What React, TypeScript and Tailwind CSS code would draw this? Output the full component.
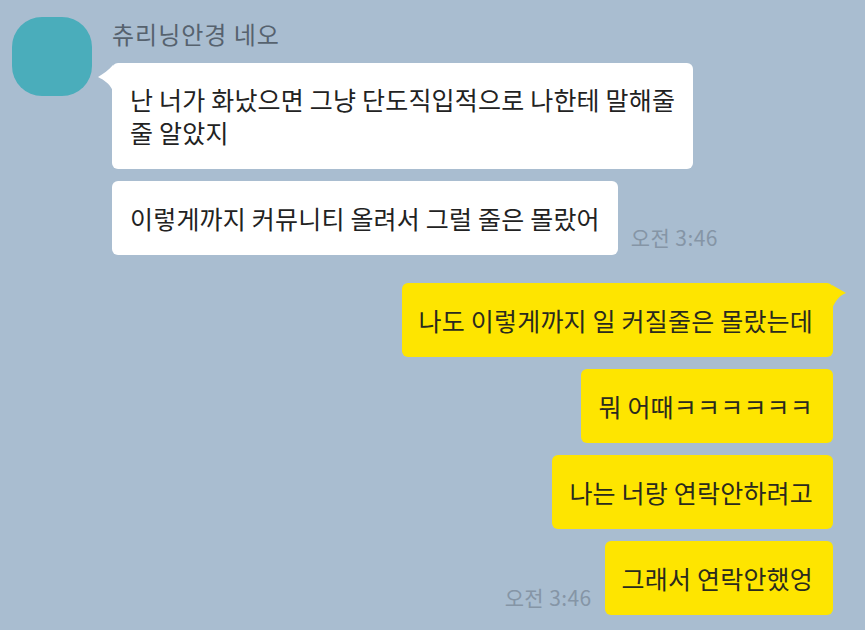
import React from "react";

const font = { fontFamily: '"Noto Sans CJK KR", "Noto Sans", sans-serif' };

function LeftTail() {
  return (
    <svg className="absolute left-[-14px] top-[2px]" width="15" height="26" viewBox="0 0 15 26">
      <path d="M15 0 L15 26 C11 18 6 15 0 12 C5 9 11 5 15 0 Z" fill="#ffffff" />
    </svg>
  );
}

function RightTail() {
  return (
    <svg className="absolute right-[-13px] top-[2px]" width="14" height="24" viewBox="0 0 14 24">
      <path d="M0 0 L14 8 C8 10 3 16 0 24 Z" fill="#fee500" />
    </svg>
  );
}

function Time() {
  return (
    <span className="mb-[7px] text-[21px] leading-none text-[#8595a6] tracking-[0.4px] whitespace-nowrap">
      오전 3:46
    </span>
  );
}

function YBubble({ children, tail }: { children: React.ReactNode; tail?: boolean }) {
  return (
    <div className="relative rounded-[6px] bg-[#fee500] pl-[17px] pr-[20px] py-[20px] text-[25px] leading-[34px] text-[#2a2a1e] tracking-[0.2px] whitespace-nowrap">
      {tail && <RightTail />}
      {children}
    </div>
  );
}

export default function App() {
  return (
    <div className="w-[865px] h-[630px] overflow-hidden bg-[#a9bdd0]" style={font}>
      <div className="flex gap-[20px] pl-[12px] pt-[17px]">
        <div className="w-[80px] h-[79px] rounded-[30px] bg-[#4aadbb] shrink-0" />
        <div className="flex flex-col">
          <div className="mt-[3px] text-[24px] leading-[27px] text-[#56626e] tracking-[1px]">츄리닝안경 네오</div>
          <div className="relative mt-[16px] w-[581px] rounded-[6px] bg-white px-[18px] py-[20px] text-[25px] leading-[33px] text-[#222] tracking-[0.2px] whitespace-nowrap">
            <LeftTail />
            난 너가 화났으면 그냥 단도직입적으로 나한테 말해줄
            <br />줄 알았지
          </div>
          <div className="mt-[12px] flex items-end gap-[13px]">
            <div className="rounded-[6px] bg-white px-[18px] py-[20px] text-[25px] leading-[34px] text-[#222] tracking-[0.2px] whitespace-nowrap">
              이렇게까지 커뮤니티 올려서 그럴 줄은 몰랐어
            </div>
            <Time />
          </div>
        </div>
      </div>
      <div className="mt-[28px] flex flex-col items-end gap-[12px] pr-[32px]">
        <YBubble tail>나도 이렇게까지 일 커질줄은 몰랐는데</YBubble>
        <YBubble>뭐 어때ㅋㅋㅋㅋㅋㅋ</YBubble>
        <YBubble>나는 너랑 연락안하려고</YBubble>
        <div className="flex items-end gap-[13px]">
          <Time />
          <YBubble>그래서 연락안했엉</YBubble>
        </div>
      </div>
    </div>
  );
}
